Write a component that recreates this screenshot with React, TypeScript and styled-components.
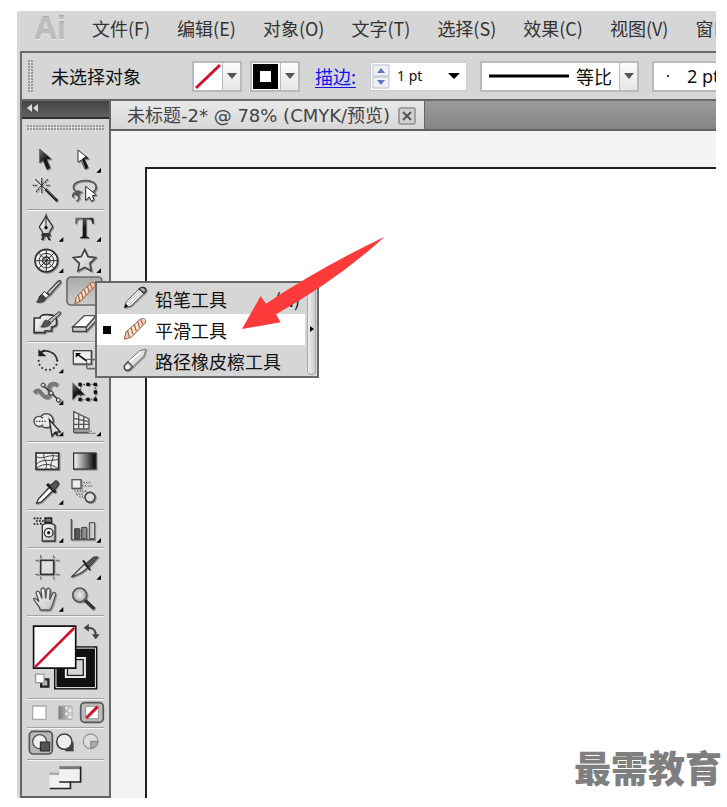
import React from "react";
import styled, { createGlobalStyle, css } from "styled-components";

const GlobalStyle = createGlobalStyle`
  *, *::before, *::after { box-sizing: border-box; }
  body { margin: 0; background: #fff; overflow: hidden; }
  button, input { font: inherit; color: inherit; margin: 0; }
`;

const Page = styled.div`
  position: relative;
  min-height: 100vh;
  padding: 11px 11px 9px 17px;
  background: #fff;
  color: #1c1c1c;
  font: 18px/24px "Noto Sans", "Noto Sans CJK SC", sans-serif;
`;

const Window = styled.main`
  display: flex;
  flex-direction: column;
  min-height: calc(100vh - 20px);
  padding-left: 3px;
  background: #d6d6d6;
  overflow: hidden;
`;

const MenuBar = styled.nav`
  display: flex;
  align-items: center;
  gap: 27px;
  height: 40px;
  padding: 0 0 6px 14px;
  overflow: hidden;
`;

const Logo = styled.span`
  width: 31px;
  font: bold 32px/32px "Liberation Sans", sans-serif;
  color: #bdbdbd;
  text-shadow: 0 1px 0 #e8e8e8, 0 -1px 0 #a8a8a8;
`;

const MenuButton = styled.button`
  flex: none;
  padding: 0;
  border: 0;
  background: none;
  font-family: "Noto Sans CJK SC", sans-serif;
  color: #333;
`;

const ControlBar = styled.section`
  display: flex;
  align-items: center;
  height: 50px;
  padding-left: 6px;
  border: solid #6a6a6a;
  border-width: 2px 0 2px 2px;
  background: #d6d6d6;
  overflow: hidden;
  white-space: nowrap;
`;

const dots = css`
  background-image: radial-gradient(circle at 1px 1px, #9a9a9a 0, #9a9a9a 1px, transparent 1px);
  background-size: 3px 3px;
`;

const BarGrip = styled.div`
  flex: none;
  width: 6px;
  height: 33px;
  margin-right: 17px;
  ${dots}
`;

const Status = styled.span`
  flex: none;
  width: 141px;
  font-family: "Noto Sans CJK SC", sans-serif;
  color: #111;
`;

const Combo = styled.button<{ $gap?: number }>`
  flex: none;
  display: flex;
  align-items: stretch;
  height: 31px;
  padding: 0;
  margin-right: ${(p) => p.$gap ?? 8}px;
  border: 2px solid #b9b9c0;
  background: #fff;
  color: #111;
`;

const ComboFace = styled.span<{ $width: number }>`
  display: flex;
  align-items: center;
  gap: 6px;
  width: ${(p) => p.$width}px;
  font-family: "Noto Sans CJK SC", sans-serif;
`;

const ComboArrow = styled.span`
  display: flex;
  align-items: center;
  justify-content: center;
  width: 18px;
  border-left: 1px solid #b9b9c0;
  background: linear-gradient(#fbfbfb, #e6e6e6);
`;

const StrokeLink = styled.a`
  flex: none;
  width: 55px;
  margin-left: 7px;
  color: #1010f0;
  font-family: "Noto Sans CJK SC", sans-serif;
  text-decoration: underline;
  text-underline-offset: 3px;
`;

const Weight = styled.label`
  flex: none;
  display: flex;
  align-items: center;
  width: 97px;
  height: 29px;
  margin-right: 13px;
  padding: 1px 6px 1px 1px;
  border: 1px solid #c6ccd8;
  background: #fff;
`;

const WeightInput = styled.input`
  width: 58px;
  min-width: 0;
  padding: 0 0 0 7px;
  border: 0;
  background: none;
  outline: 0;
  font: 14px/20px "Noto Sans", sans-serif;
  color: #111;
`;

const BrushText = styled.span`
  display: flex;
  align-items: center;
  gap: 17px;
  padding-left: 12px;
  font-family: "Noto Sans", sans-serif;
`;

const Workspace = styled.div`
  flex: 1;
  display: flex;
  min-height: 0;
`;

const Toolbox = styled.aside`
  position: relative;
  flex: none;
  width: 91px;
  border: solid #656565;
  border-width: 0 2px 2px 2px;
  background: #d6d6d6;
`;

const ToolboxHeader = styled.button`
  display: flex;
  align-items: center;
  width: 100%;
  height: 18px;
  padding: 0 4px 2px;
  border: 0;
  border-bottom: 2px solid #2e2e2e;
  background: linear-gradient(#444, #606060);
`;

const ToolGrip = styled.div`
  height: 6px;
  margin: 6px 4px 13px 5px;
  ${dots}
`;

const ToolGroup = styled.div<{ $extra?: number }>`
  display: grid;
  grid-template-columns: 38px 38px;
  padding: 0 6px ${(p) => p.$extra ?? 0}px;
`;

const Rule = styled.hr`
  height: 2px;
  margin: 1px 5px;
  border: 0;
  border-top: 1px solid #a2a2a2;
  background: #f6f6f6;
`;

const ToolButton = styled.button<{ $w?: number; $h?: number }>`
  display: block;
  width: ${(p) => p.$w ?? 38}px;
  height: ${(p) => p.$h ?? 32}px;
  padding: 0;
  border: 0;
  background: none;
  line-height: 0;
  svg { display: block; width: 100%; height: 100%; overflow: visible; }
`;

const ModeRow = styled.div`
  display: flex;
  padding: 0 6px;
`;

const DocumentArea = styled.section`
  flex: 1;
  display: flex;
  flex-direction: column;
  min-width: 0;
`;

const TabBar = styled.div`
  display: flex;
  height: 30px;
  background: linear-gradient(#9b9b9b, #868686);
  border-bottom: 2px solid #626262;
`;

const Tab = styled.div`
  display: flex;
  align-items: center;
  gap: 8px;
  padding: 2px 8px 0 16px;
  border-right: 1px solid #666;
  background: linear-gradient(#e9e9e9, #d8d8d8);
  color: #444;
  font-family: "DejaVu Sans", "Noto Sans CJK SC", sans-serif;
  white-space: nowrap;
`;

const TabClose = styled.button`
  display: grid;
  place-items: center;
  width: 18px;
  height: 18px;
  padding: 0;
  border: 2px solid #a0a0a0;
  border-radius: 3px;
  background: #d2d2d2;
`;

const Canvas = styled.div`
  flex: 1;
  display: flex;
  padding: 36px 0 0 34px;
  background: #f4f4f4;
`;

const Artboard = styled.div`
  flex: 1;
  border: solid #222;
  border-width: 2px 0 0 2px;
  background: #fff;
`;

const Flyout = styled.ul`
  position: absolute;
  left: 73px;
  top: 180px;
  z-index: 2;
  display: grid;
  grid-template-columns: 1fr 12px;
  width: 224px;
  margin: 0;
  padding: 0;
  border: 2px solid #686868;
  background: #d6d6d6;
  list-style: none;
`;

const FlyoutItem = styled.li`
  grid-column: 1;
`;

const FlyoutButton = styled.button<{ $active?: boolean }>`
  display: grid;
  grid-template-columns: 26px 32px 1fr auto;
  align-items: center;
  width: 100%;
  height: 31px;
  padding: 0 5px 0 0;
  border: 0;
  background: ${(p) => (p.$active ? "#fff" : "transparent")};
  color: #111;
  font-family: "Noto Sans CJK SC", sans-serif;
  text-align: left;
  white-space: nowrap;
  svg { display: block; overflow: visible; }
`;

const Marker = styled.span<{ $on?: boolean }>`
  width: 8px;
  height: 8px;
  margin-left: 6px;
  background: ${(p) => (p.$on ? "#000" : "transparent")};
`;

const TearOff = styled.li`
  grid-column: 2;
  grid-row: 1 / span 3;
  display: grid;
  place-items: center;
  margin: 0 1px 1px 2px;
  border: 1px solid #aaa;
  border-radius: 4px;
  background: linear-gradient(90deg, #eee, #ccc);
`;

const Pointer = styled.svg`
  position: absolute;
  z-index: 3;
  left: 240px;
  top: 234px;
  width: 147px;
  height: 100px;
  pointer-events: none;
`;

const Watermark = styled.div`
  position: absolute;
  right: 5px;
  bottom: 16px;
  font: 900 37px/48px "Noto Sans CJK SC", sans-serif;
  color: #7f7f7f;
  white-space: nowrap;
`;

const Caret = ({ color = "#555", size = 10 }: { color?: string; size?: number }) => (
  <svg width={size} height="6" viewBox="0 0 10 6" preserveAspectRatio="none" aria-hidden="true">
    <path d="M0 0h10L5 6z" fill={color} />
  </svg>
);

/* Tool drawings use three units for each pixel. */
const Corner = ({ x, y }: { x: number; y: number }) => <path d={`M${x} ${y}v-14l-14 14z`} fill="#000" />;

type Tool = { name: string; x: number; y: number; art: React.ReactNode; selected?: boolean };

const line = { fill: "none", stroke: "#333", strokeWidth: 3 } as const;

const selectTools: Tool[] = [
  { name: "选择工具", x: 54, y: 147, art: <path d="M89 162v42l10-8 12 28 10-5-11-26 14-1z" fill="url(#black)" stroke="#444" strokeWidth="2" filter="url(#soft)" /> },
  { name: "直接选择工具", x: 168, y: 147, art: <><path d="M204 165v37l9-7 12 27 9-4-12-26 14-1z" fill="#fff" stroke="#333" strokeWidth="3" filter="url(#soft)" /><path d="M215 193l12 28 7-4-12-26 13-1-7-6z" fill="#111" /><Corner x={273} y={233} /></> },
  { name: "魔棒工具", x: 54, y: 243, art: <g filter="url(#soft)"><path d="M106 282l36 36" stroke="#222" strokeWidth="8" /><path d="M108 281l29 29" stroke="#aaa" strokeWidth="2" /><path d="M95 249v13M95 282v12M68 271h14M108 271h13M76 253l11 10M113 253l-10 10M78 290l9-9" stroke="#444" strokeWidth="4" strokeDasharray="5 2" /><path d="M85 262l20 19M104 262l-19 19M95 261v20" {...line} /></g> },
  { name: "套索工具", x: 168, y: 243, art: <g filter="url(#soft)"><path d="M198 290c-20-17 0-34 32-33 33 2 35 25 17 37M198 290c16-8 14 13 3 9-14-6-16 2-9 9M201 299c10 5 8 15-2 20M189 295l28-4" fill="none" stroke="#555" strokeWidth="5" /><path d="M227 274v42l11-10 6 13 8-5-5-12 12-2z" fill="#fff" stroke="#222" strokeWidth="3" /></g> },
];

const drawTools: Tool[] = [
  { name: "钢笔工具", x: 54, y: 21, art: <><g filter="url(#soft)"><path d="M108 31c5 18 20 26 20 36-7 8-10 13-10 19H98c0-7-4-12-10-19 2-11 16-20 20-36z" fill="url(#metal)" stroke="#333" strokeWidth="4" /><path d="M108 35v31" stroke="#222" strokeWidth="3" /><circle cx="108" cy="68" r="5" /><path d="M94 87h28v7h-5l5 11h-8l-2-10h-8l-3 10h-8l4-11h-3z" fill="#333" /></g><Corner x={160} y={110} /></> },
  { name: "文字工具", x: 168, y: 21, art: <><path d="M196 38h54l1 18h-4c-1-10-5-13-11-13h-7v47c0 5 3 6 8 7v3h-27v-3c6-1 8-2 8-7V43h-7c-7 0-10 4-11 13h-4z" fill="url(#black)" filter="url(#soft)" /><Corner x={273} y={110} /></> },
  { name: "极坐标网格工具", x: 54, y: 117, art: <><circle cx="109" cy="167" r="34" fill="#efefef" stroke="#333" strokeWidth="5" filter="url(#soft)" /><circle cx="109" cy="167" r="22" {...line} /><circle cx="109" cy="167" r="11" {...line} strokeWidth="4" /><path d="M75 167h68M109 133v68M85 143l48 48M133 143l-48 48" {...line} /><Corner x={160} y={204} /></> },
  { name: "星形工具", x: 168, y: 117, art: <><path d="M224 134l10 21 23 3-17 17 4 23-20-11-20 11 4-23-18-17 24-3z" fill="url(#metal)" stroke="#444" strokeWidth="5" filter="url(#soft)" /><Corner x={273} y={204} /></> },
  { name: "画笔工具", x: 54, y: 213, art: <g filter="url(#soft)"><path d="M112 263l32-34c5-3 11-2 7 4l-32 37z" fill="#d0d0d0" stroke="#444" strokeWidth="4" /><path d="M103 259l14 13-10 8-12-11z" fill="#eee" stroke="#333" strokeWidth="3" /><path d="M95 268l13 12c-6 13-19 13-29 11 8-4 5-18 16-23z" fill="#444" stroke="#222" strokeWidth="2" /></g> },
  { name: "平滑工具", x: 168, y: 213, selected: true, art: <><rect x="171" y="216" width="105" height="84" rx="12" fill="url(#pressed)" stroke="#6b6b6b" strokeWidth="5" /><path d="M194 298l5-22 42-41c8-5 18-2 14 9l-42 43z" fill="#efc4a6" stroke="#955b40" strokeWidth="3" /><path d="M205 270l4 18M214 262l5 18M223 253l6 18M232 244l6 18M240 237l8 15" stroke="#995f45" strokeWidth="3" /><path d="M201 275l3 13M210 267l4 15M219 258l4 15M228 249l4 15" stroke="#fff0e2" strokeWidth="3" /></> },
  { name: "斑点画笔工具", x: 54, y: 309, art: <g filter="url(#soft)"><path d="M73 339h17c-2-14 37-12 47-4 6 18 5 30-12 31v12H105v5H72z" fill="url(#metal)" stroke="#333" strokeWidth="5" /><path d="M115 346l31-25c6-2 8 2 4 6l-28 27z" fill="#bbb" stroke="#333" strokeWidth="3" /><path d="M109 345l14 10c-5 10-18 14-31 10 8-4 5-17 17-20z" fill="#555" stroke="#222" strokeWidth="2" /></g> },
  { name: "橡皮擦工具", x: 168, y: 309, art: <g filter="url(#soft)"><path d="M188 366l35-34h35l-29 34z" fill="#fff" stroke="#555" strokeWidth="4" /><path d="M188 366h41v13h-41zM229 366l29-34v16l-29 31z" fill="#ccc" stroke="#444" strokeWidth="4" /></g> },
];

const transformTools: Tool[] = [
  { name: "旋转工具", x: 54, y: 27, art: <><path d="M88 53c20-12 52-1 53 24" {...line} strokeWidth="5" /><path d="M86 61l18-17M87 47v15h17z" fill="#222" stroke="#222" strokeWidth="4" /><circle cx="114" cy="77" r="28" fill="none" stroke="#222" strokeWidth="6" strokeLinecap="round" strokeDasharray="0 12.5 0 12.5 0 12.5 0 12.5 0 12.5 0 12.5 0 12.5 0 88" /><Corner x={160} y={115} /></> },
  { name: "比例缩放工具", x: 168, y: 27, art: <g filter="url(#soft)"><rect x="190" y="47" width="54" height="40" fill="#eee" stroke="#444" strokeWidth="4" /><path d="M197 54h17l-17 14z" fill="#111" /><path d="M203 58l27 20" stroke="#111" strokeWidth="5" /><path d="M230 73h28v27h-28z" {...line} stroke="#555" /></g> },
  { name: "变形工具", x: 54, y: 123, art: <><g filter="url(#soft)"><path d="M73 174c15-20 19 5 31 10 13 6 18-2 14-19-4-19 14-23 25-14" fill="none" stroke="#777" strokeWidth="12" /><path d="M99 151l46 43" stroke="#333" strokeWidth="4" /><circle cx="99" cy="150" r="6" fill="#ddd" stroke="#333" strokeWidth="3" /><circle cx="123" cy="174" r="6" fill="#ddd" stroke="#333" strokeWidth="3" /><circle cx="145" cy="195" r="6" fill="#ddd" stroke="#333" strokeWidth="3" /></g><Corner x={160} y={210} /></> },
  { name: "自由变换工具", x: 168, y: 123, art: <g filter="url(#soft)"><path d="M211 148h45v45h-45z" {...line} strokeDasharray="5 4" /><path d="M205 143h10v10h-10zM229 143h10v10h-10zM251 143h10v10h-10zM251 166h10v10h-10zM251 188h10v10h-10zM229 188h10v10h-10zM205 188h10v10h-10z" fill="#111" /><path d="M188 143v51l13-15h23z" fill="url(#black)" stroke="#333" /></g> },
  { name: "形状生成器工具", x: 54, y: 219, art: <><g filter="url(#soft)"><circle cx="109" cy="257" r="21" fill="#e4e4e4" stroke="#444" strokeWidth="4" /><circle cx="87" cy="259" r="15" fill="#eee" stroke="#444" strokeWidth="4" /><path d="M97 259h15" stroke="#eee" strokeWidth="20" /><path d="M79 259h30" stroke="#222" strokeWidth="4" strokeDasharray="4 4" /><path d="M118 254l8 49 9-11 15-2z" fill="#ddd" stroke="#222" strokeWidth="4" /><path d="M135 291l8 11" stroke="#222" strokeWidth="6" /></g><Corner x={160} y={304} /></> },
  { name: "透视网格工具", x: 168, y: 219, art: <><path d="M191 229v63h45" {...line} strokeWidth="4" stroke="#555" /><path d="M191 230l46 22v30h-46z" fill="#e8e8e8" stroke="#555" strokeWidth="4" /><path d="M206 237v44M221 245v36M191 250l46 10M191 268h46" {...line} strokeWidth="4" stroke="#555" /><path d="M194 288h52M194 295h63" stroke="#777" strokeWidth="3" /><Corner x={273} y={304} /></> },
];

const paintTools: Tool[] = [
  { name: "网格工具", x: 54, y: 12, art: <g filter="url(#soft)"><rect x="78" y="39" width="68" height="49" fill="#eee" stroke="#333" strokeWidth="5" /><path d="M104 38c-12 19 16 26 2 50M125 38c15 18-11 29 0 50M78 50c25 11 30-9 68-1M78 74c17-21 48-8 68-17M79 85c24-18 45-13 64 0" {...line} stroke="#444" /></g> },
  { name: "渐变工具", x: 168, y: 12, art: <rect x="191" y="39" width="67" height="48" fill="url(#ramp)" stroke="#333" strokeWidth="4" filter="url(#soft)" /> },
  { name: "吸管工具", x: 54, y: 108, art: <><g filter="url(#soft)"><path d="M80 190l5-13 34-36 11 10-36 35z" fill="#fff" stroke="#333" strokeWidth="4" /><path d="M111 132l26 25" stroke="#222" strokeWidth="9" /><path d="M119 136l10-6c5-12 18-9 17 3l-9 13-7 7z" fill="#555" stroke="#222" strokeWidth="3" /></g><Corner x={160} y={194} /></> },
  { name: "混合工具", x: 168, y: 108, art: <g filter="url(#soft)"><rect x="186" y="119" width="27" height="26" fill="#eee" stroke="#555" strokeWidth="4" /><path d="M220 127h20M217 137h28M193 153h36M198 162h24M208 170h12" stroke="#555" strokeWidth="4" strokeDasharray="3 5" /><circle cx="240" cy="172" r="15" fill="#ddd" stroke="#444" strokeWidth="5" /></g> },
];

const symbolTools: Tool[] = [
  { name: "符号喷枪工具", x: 54, y: 216, art: <><path d="M71 235h24M78 243h24M71 252h14M90 251h8" stroke="#111" strokeWidth="5" strokeDasharray="5 4" /><path d="M105 234h20v13h-20z" fill="#777" stroke="#222" strokeWidth="4" /><path d="M97 256c6-8 31-8 38 0v47H97z" fill="url(#metal)" stroke="#333" strokeWidth="4" filter="url(#soft)" /><circle cx="116" cy="278" r="13" fill="#eee" stroke="#333" strokeWidth="4" /><circle cx="116" cy="278" r="5" fill="#222" /><Corner x={160} y={308} /></> },
  { name: "柱形图工具", x: 168, y: 216, art: <><g filter="url(#soft)"><path d="M184 237v62h71" {...line} stroke="#555" strokeWidth="4" /><path d="M194 266h15v30h-15zM215 262h15v34h-15zM238 248h16v48h-16z" fill="url(#bar)" stroke="#444" strokeWidth="3" /></g><Corner x={273} y={308} /></> },
];

const viewTools: Tool[] = [
  { name: "画板工具", x: 54, y: 15, art: <g filter="url(#soft)"><rect x="92" y="46" width="39" height="42" fill="#e0e0e0" stroke="#333" strokeWidth="5" /><path d="M92 30v10M131 30v10M92 94v9M131 94v9M76 46h11M137 46h11M76 88h11M137 88h11" stroke="#666" strokeWidth="3" /></g> },
  { name: "切片工具", x: 168, y: 15, art: <><g filter="url(#soft)"><path d="M184 96l39-38 10 9c-12 17-30 22-49 29z" fill="#ddd" stroke="#444" strokeWidth="4" /><path d="M226 57l25-21h14l-29 32z" fill="#555" stroke="#333" strokeWidth="3" /><path d="M219 46l21 29" stroke="#222" strokeWidth="6" /></g><Corner x={273} y={104} /></> },
  { name: "抓手工具", x: 54, y: 111, art: <><path d="M91 195c-1-15-18-21-20-34 6-4 11 3 16 9l-9-27c3-8 10-5 12 3l6 15-3-27c3-8 11-6 12 2l2 24 3-27c4-6 11-3 11 4l-2 27 9-20c6-4 11 0 8 8-6 17-7 31-16 43z" fill="url(#metal)" stroke="#555" strokeWidth="4" filter="url(#soft)" /><Corner x={160} y={200} /></> },
  { name: "缩放工具", x: 168, y: 111, art: <g filter="url(#soft)"><path d="M225 166l28 26" stroke="#333" strokeWidth="10" /><circle cx="209" cy="150" r="21" fill="url(#glass)" stroke="#555" strokeWidth="5" /></g> },
];

const Tools = ({ items, extra }: { items: Tool[]; extra?: number }) => (
  <ToolGroup $extra={extra}>
    {items.map((t) => (
      <ToolButton key={t.name} aria-label={t.name} aria-pressed={!!t.selected}>
        <svg viewBox={`${t.x} ${t.y} 114 96`} aria-hidden="true">{t.art}</svg>
      </ToolButton>
    ))}
  </ToolGroup>
);

const Gradients = () => (
  <defs>
    <linearGradient id="metal" x1="0" y1="0" x2="1" y2="1"><stop stopColor="#fff" /><stop offset="1" stopColor="#bcbcbc" /></linearGradient>
    <linearGradient id="black" x1="0" y1="0" x2="0.6" y2="1"><stop stopColor="#777" /><stop offset=".6" stopColor="#161616" /></linearGradient>
    <linearGradient id="ramp"><stop stopColor="#fff" /><stop offset="1" stopColor="#000" /></linearGradient>
    <linearGradient id="bar"><stop stopColor="#444" /><stop offset="1" stopColor="#ddd" /></linearGradient>
    <linearGradient id="pressed" x1="0" y1="0" x2="0" y2="1"><stop stopColor="#aaa" /><stop offset="1" stopColor="#ccc" /></linearGradient>
    <radialGradient id="glass"><stop stopColor="#eee" /><stop offset="1" stopColor="#aaa" /></radialGradient>
    <filter id="soft" x="-20%" y="-20%" width="150%" height="150%"><feDropShadow dx="3" dy="3" stdDeviation="2" floodOpacity=".3" /></filter>
  </defs>
);

const PencilArt = () => (
  <svg width="26" height="28" viewBox="102 182 78 84" aria-hidden="true">
    <g filter="url(#soft)"><path d="M106 250l6-19 38-37 15 13-39 38z" fill="#f2f2f2" stroke="#555" strokeWidth="3" /><path d="M150 194c8-9 22-5 21 6l-6 7z" fill="#aaa" stroke="#333" strokeWidth="4" /><path d="M115 235l38-35M121 241l37-36" stroke="#999" strokeWidth="2" /><path d="M106 250l4-12 8 8z" /></g>
  </svg>
);
const SmoothArt = () => (
  <svg width="26" height="28" viewBox="102 276 78 84" aria-hidden="true">
    <path d="M106 346l5-22 42-38c10-6 21 0 16 11l-42 43z" fill="#f1cdb6" stroke="#96654e" strokeWidth="3" />
    <path d="M116 320l5 20M126 311l6 20M136 302l6 19M146 293l6 18M155 287l7 15" stroke="#8d5941" strokeWidth="3" />
    <path d="M121 317l5 18M131 308l5 18M141 298l5 18" stroke="#fff" strokeWidth="3" />
  </svg>
);
const PathEraserArt = () => (
  <svg width="26" height="28" viewBox="102 370 78 84" aria-hidden="true">
    <g filter="url(#soft)"><path d="M116 415l36-34 19-5-6 20-35 35z" fill="#ddd" stroke="#777" strokeWidth="3" /><path d="M118 417l38-32" stroke="#fff" strokeWidth="5" /><path d="M108 424l9-10 14 15-9 9c-12 7-21-4-14-14z" fill="#ccc" stroke="#444" strokeWidth="4" /><circle cx="115" cy="430" r="6" fill="#fff" /></g>
  </svg>
);

const menus = ["文件(F)", "编辑(E)", "对象(O)", "文字(T)", "选择(S)", "效果(C)", "视图(V)", "窗口(W)"];

export default function App() {
  return (
    <Page>
      <GlobalStyle />
      <Window>
        <MenuBar aria-label="主菜单">
          <Logo>Ai</Logo>
          {menus.map((m) => <MenuButton key={m}>{m}</MenuButton>)}
        </MenuBar>
        <ControlBar aria-label="控制">
          <BarGrip />
          <Status>未选择对象</Status>
          <Combo aria-label="填色">
            <ComboFace $width={28}>
              <svg width="28" height="27" viewBox="0 0 28 27"><path d="M2 25L26 2" stroke="#d1122f" strokeWidth="3" /></svg>
            </ComboFace>
            <ComboArrow><Caret /></ComboArrow>
          </Combo>
          <Combo aria-label="描边颜色">
            <ComboFace $width={28}>
              <svg width="28" height="27" viewBox="0 0 28 27"><path d="M1 1h25v25H1zM8 8v11h11V8z" fillRule="evenodd" /></svg>
            </ComboFace>
            <ComboArrow><Caret /></ComboArrow>
          </Combo>
          <StrokeLink href="#stroke">描边:</StrokeLink>
          <Weight>
            <svg width="18" height="25" viewBox="0 0 18 25" aria-hidden="true"><path d="M1 1h16v11H1zM1 13h16v11H1z" fill="#eef0f6" stroke="#bcbfc9" /><path d="M5 9l4-5 4 5zM5 16l4 5 4-5z" fill="#6278bd" /></svg>
            <WeightInput aria-label="描边粗细" defaultValue="1 pt" />
            <Caret color="#000" size={12} />
          </Weight>
          <Combo aria-label="变量宽度配置文件" $gap={13}>
            <ComboFace $width={137}>
              <svg width="88" height="27" viewBox="0 0 88 27"><path d="M7 13h80" stroke="#000" strokeWidth="3" /></svg>
              等比
            </ComboFace>
            <ComboArrow><Caret /></ComboArrow>
          </Combo>
          <Combo aria-label="画笔定义">
            <BrushText><svg width="4" height="4"><circle cx="2" cy="2" r="1" /></svg>2 pt</BrushText>
          </Combo>
        </ControlBar>
        <Workspace>
          <Toolbox aria-label="工具">
            <ToolboxHeader aria-label="折叠">
              <svg width="13" height="10" viewBox="0 0 13 10"><path d="M6 1v8L1 5zM12 1v8L7 5z" fill="#ddd" /></svg>
            </ToolboxHeader>
            <ToolGrip />
            <Tools items={selectTools} />
            <Rule />
            <Tools items={drawTools} />
            <Rule />
            <Tools items={transformTools} />
            <Rule />
            <Tools items={paintTools} />
            <Rule />
            <Tools items={symbolTools} extra={2} />
            <Rule />
            <Tools items={viewTools} />
            <Rule />
            <ModeRow>
              <ToolButton $w={76} $h={79} aria-label="填色和描边">
                <svg viewBox="54 18 228 237">
                  <Gradients />
                  <path d="M133 102h132v132H133z" fill="#111" />
                  <path d="M139 108h120v120H139z" fill="none" stroke="#eee" strokeWidth="3" />
                  <path d="M168 137h60v60h-60z" fill="#d6d6d6" stroke="#eee" strokeWidth="4" />
                  <path d="M174 143h48v48h-48z" fill="#d6d6d6" stroke="#222" strokeWidth="4" />
                  <path d="M71 41h128v128H71z" fill="#fff" stroke="#111" strokeWidth="5" />
                  <path d="M76 165L195 46" stroke="#d1122f" strokeWidth="8" />
                  <path d="M233 46c20-1 27 8 27 24" fill="none" stroke="#444" strokeWidth="6" />
                  <path d="M223 46l16-12v24zM248 66h24l-12 15z" fill="#444" />
                  <path d="M94 203h22v22H94z" fill="#bbb" stroke="#222" strokeWidth="7" />
                  <path d="M77 187h26v26H77z" fill="#fff" stroke="#999" strokeWidth="4" />
                </svg>
              </ToolButton>
            </ModeRow>
            <Rule />
            <ModeRow>
              <ToolButton $w={25} $h={25} aria-label="颜色"><svg viewBox="54 33 75 75"><path d="M68 48h40v40H68z" fill="#fff" stroke="#aaa" strokeWidth="4" /></svg></ToolButton>
              <ToolButton $w={25} $h={25} aria-label="渐变"><svg viewBox="129 33 75 75"><path d="M145 48h41v40h-41z" fill="url(#mode)" stroke="#aaa" strokeWidth="3" /><defs><linearGradient id="mode"><stop stopColor="#777" /><stop offset="1" stopColor="#ddd" /></linearGradient></defs><path d="M166 50h7v8h-7zM176 58h8v8h-8zM166 68h7v8h-7zM176 77h8v8h-8z" fill="#eee" /></svg></ToolButton>
              <ToolButton $w={25} $h={25} aria-label="无" aria-pressed="true"><svg viewBox="204 33 75 75"><rect x="212" y="38" width="68" height="59" rx="12" fill="#bbb" stroke="#555" strokeWidth="5" /><path d="M227 49h38v37h-38z" fill="#fff" stroke="#777" strokeWidth="2" /><path d="M229 84l34-34" stroke="#d1122f" strokeWidth="9" /></svg></ToolButton>
            </ModeRow>
            <Rule />
            <ModeRow>
              <ToolButton $w={25} $h={28} aria-label="正常绘图" aria-pressed="true"><svg viewBox="54 120 75 84"><rect x="58" y="124" width="69" height="68" rx="12" fill="#b8b8b8" stroke="#555" strokeWidth="5" /><circle cx="89" cy="155" r="21" fill="#eee" stroke="#555" strokeWidth="4" /><path d="M91 156h28v27H91z" fill="#555" stroke="#222" strokeWidth="3" /></svg></ToolButton>
              <ToolButton $w={25} $h={28} aria-label="背面绘图"><svg viewBox="129 120 75 84"><path d="M166 157h25v27h-25z" fill="#444" /><circle cx="163" cy="155" r="23" fill="#eee" stroke="#444" strokeWidth="5" /></svg></ToolButton>
              <ToolButton $w={25} $h={28} aria-label="内部绘图"><svg viewBox="204 120 75 84"><circle cx="242" cy="154" r="22" fill="#ddd" stroke="#999" strokeWidth="4" /><path d="M242 154h21c0 13-9 21-21 21z" fill="#aaa" stroke="#888" strokeWidth="3" /></svg></ToolButton>
            </ModeRow>
            <Rule />
            <ModeRow>
              <ToolButton $w={76} $h={34} aria-label="更改屏幕模式">
                <svg viewBox="54 216 228 102"><path d="M119 247h63v48h-63z" fill="#f1f1f1" /><path d="M119 247h63v8h-63z" fill="#aaa" /><path d="M120 296h63v-43" fill="none" stroke="#222" strokeWidth="5" /><path d="M149 228h64v47h-64z" fill="#f1f1f1" /><path d="M149 228h64v9h-64z" fill="#777" /><path d="M149 276h65v-47" fill="none" stroke="#222" strokeWidth="5" /></svg>
              </ToolButton>
            </ModeRow>
            <Flyout>
              <FlyoutItem><FlyoutButton><Marker /><PencilArt /><span>铅笔工具</span><span>(N)</span></FlyoutButton></FlyoutItem>
              <FlyoutItem><FlyoutButton $active><Marker $on /><SmoothArt /><span>平滑工具</span></FlyoutButton></FlyoutItem>
              <FlyoutItem><FlyoutButton><Marker /><PathEraserArt /><span>路径橡皮檫工具</span></FlyoutButton></FlyoutItem>
              <TearOff><svg width="4" height="6"><path d="M0 0l4 3-4 3z" /></svg></TearOff>
            </Flyout>
          </Toolbox>
          <DocumentArea>
            <TabBar>
              <Tab>
                <span>未标题-2* @ 78% (CMYK/预览)</span>
                <TabClose aria-label="关闭"><svg width="10" height="10" viewBox="0 0 10 10"><path d="M1 1l8 8M9 1L1 9" stroke="#555" strokeWidth="2" /></svg></TabClose>
              </Tab>
            </TabBar>
            <Canvas><Artboard /></Canvas>
          </DocumentArea>
        </Workspace>
      </Window>
      <Pointer viewBox="450 27 441 300" aria-hidden="true">
        <path d="M456 312l56-99 16 23Q690 128 884 35 745 162 558 268l14 24z" fill="#fb3a39" />
      </Pointer>
      <Watermark>最需教育</Watermark>
    </Page>
  );
}
